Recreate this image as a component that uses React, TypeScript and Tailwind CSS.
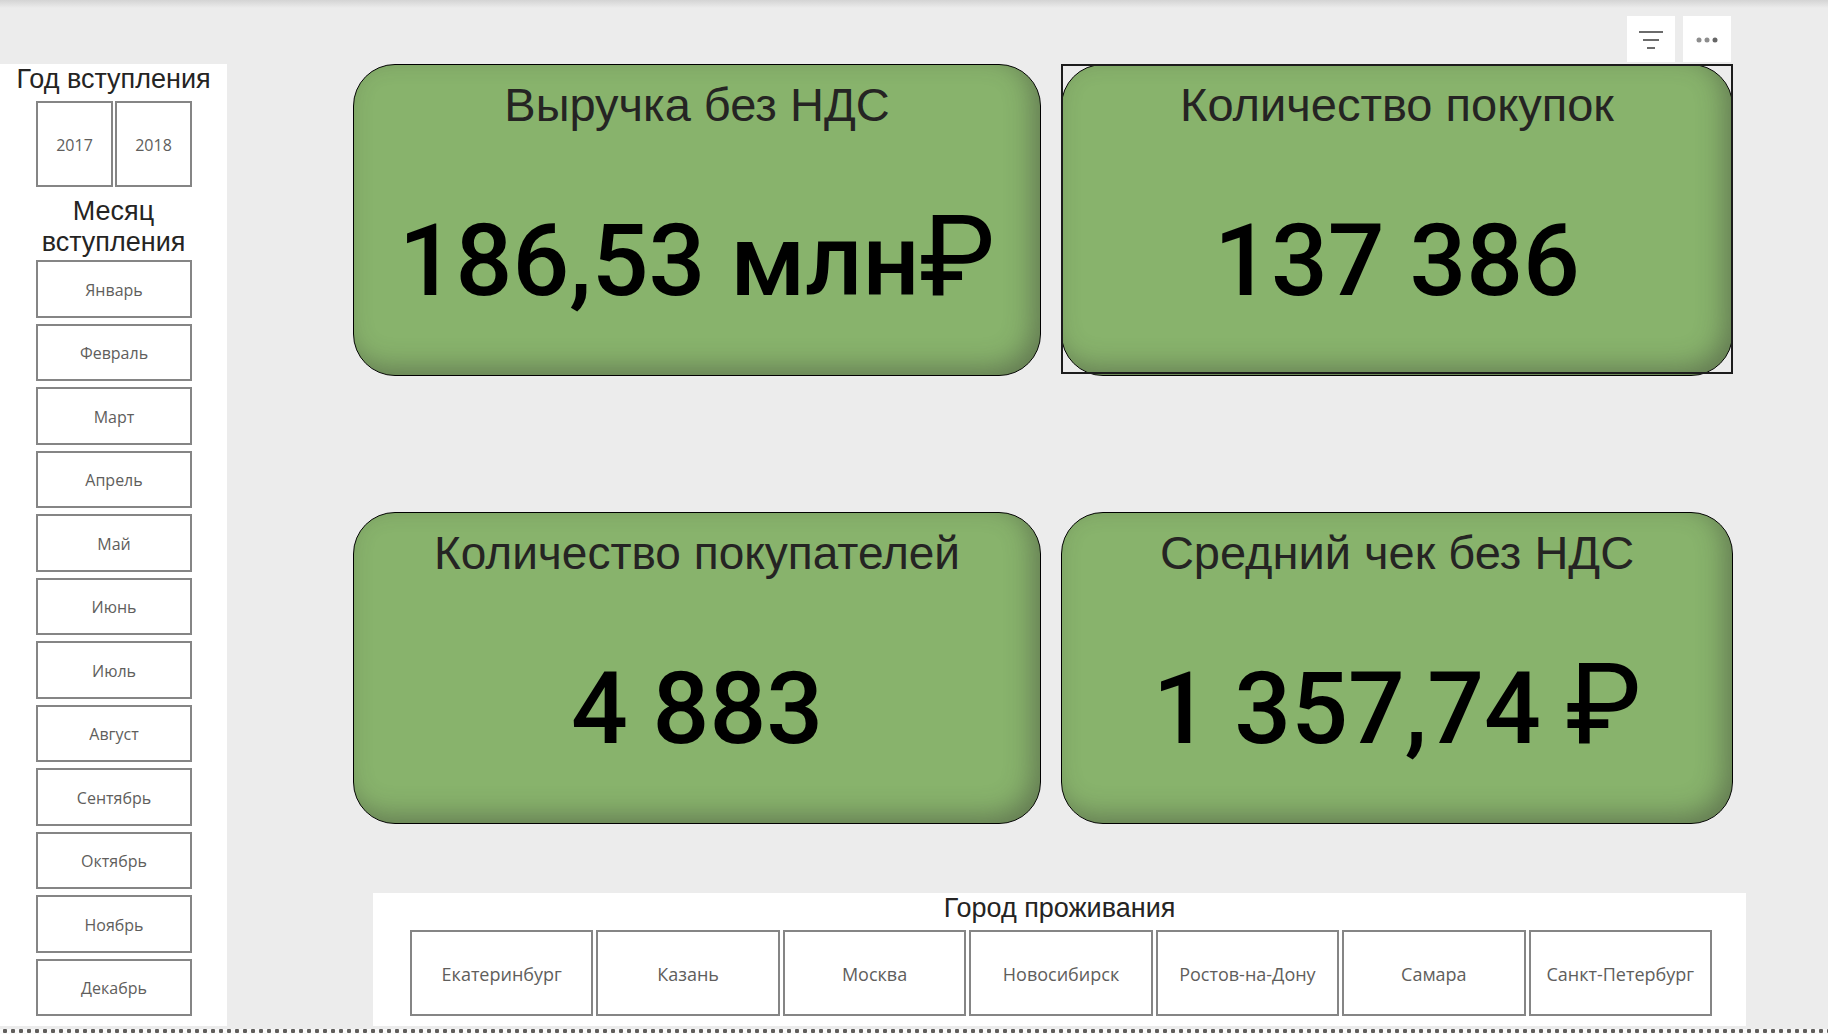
import React from "react";

const months = ["Январь","Февраль","Март","Апрель","Май","Июнь","Июль","Август","Сентябрь","Октябрь","Ноябрь","Декабрь"];
const cities = ["Екатеринбург","Казань","Москва","Новосибирск","Ростов-на-Дону","Самара","Санкт-Петербург"];

function SlicerTitle({ children }: { children: React.ReactNode }) {
  return (
    <h2 className="text-center font-['Liberation_Sans',sans-serif] text-[27px] leading-[31px] text-[#252423]">{children}</h2>
  );
}

function SlicerButton({ label, large = false }: { label: string; large?: boolean }) {
  return (
    <button
      type="button"
      className={`flex min-w-0 items-center justify-center border-2 border-[#858585] bg-white pt-[2px] font-['Open_Sans','Noto_Sans',sans-serif] leading-6 whitespace-nowrap text-[#605e5c] ${large ? "text-[18px]" : "text-[16px]"}`}
    >
      {label}
    </button>
  );
}

function Ruble() {
  return <span className="text-[114px] leading-[0px] font-normal">₽</span>;
}

function Card({
  title,
  children,
  selected = false,
  compact = false,
}: {
  title: string;
  children: React.ReactNode;
  selected?: boolean;
  compact?: boolean;
}) {
  return (
    <section className="relative h-[312px]">
      <div className="flex h-full flex-col items-center rounded-[42px] border border-black bg-[#88b36c] pt-3 shadow-[inset_-9px_-9px_28px_-3px_rgba(55,55,50,0.48)]">
        <h2
          className={`font-['Liberation_Sans',sans-serif] leading-[56px] whitespace-nowrap text-[#252423] ${compact ? "text-[46px]" : "text-[47px]"}`}
        >
          {title}
        </h2>
        <p className="mt-[68px] font-['Roboto',sans-serif] text-[100px] leading-[120px] font-medium whitespace-nowrap text-black">{children}</p>
      </div>
      {selected && <div className="pointer-events-none absolute inset-x-0 top-0 bottom-[2px] border-2 border-[#1c1c1c]" />}
    </section>
  );
}

export default function App() {
  return (
    <main className="flex min-h-screen flex-col bg-[#ececec]">
      <div className="h-2 bg-linear-to-b from-[#d4d4d4] to-[#ececec]" />
      <div className="flex h-14 items-start justify-end gap-2 pt-2 pr-[97px]">
        <button type="button" aria-label="Фильтры" className="flex h-[46px] w-12 items-center justify-center bg-white">
          <svg width="24" height="20" viewBox="0 0 24 20" stroke="#6b6b6b" strokeWidth="2">
            <path d="M0 3H24M4 11H20M8 19H16" />
          </svg>
        </button>
        <button type="button" aria-label="Дополнительные параметры" className="flex h-[46px] w-12 items-center justify-center bg-white">
          <svg width="22" height="8" viewBox="0 0 22 8">
            <circle cx="3" cy="5" r="2.5" fill="#8d8d8d" />
            <circle cx="11" cy="5" r="2.5" fill="#8d8d8d" />
            <circle cx="19" cy="5" r="2.5" fill="#666" />
          </svg>
        </button>
      </div>
      <div className="flex flex-1">
        <aside className="flex w-[227px] flex-col bg-white pb-[10px]">
          <SlicerTitle>Год вступления</SlicerTitle>
          <div className="mt-[6px] mr-[35px] ml-9 grid h-[86px] grid-cols-2 gap-[2px]">
            <SlicerButton label="2017" />
            <SlicerButton label="2018" />
          </div>
          <div className="mt-[9px] px-8">
            <SlicerTitle>Месяц вступления</SlicerTitle>
          </div>
          <div className="mt-[2px] mr-[35px] ml-9 grid flex-1 auto-rows-fr gap-[6px]">
            {months.map((m) => (
              <SlicerButton key={m} label={m} />
            ))}
          </div>
        </aside>
        <div className="flex min-w-0 flex-1 flex-col justify-between">
          <div className="mr-[95px] ml-[126px] grid grid-cols-[688fr_672fr] gap-x-5 gap-y-[136px]">
            <Card title="Выручка без НДС">
              186,53 млн<Ruble />
            </Card>
            <Card title="Количество покупок" selected>137 386</Card>
            <Card title="Количество покупателей" compact>4 883</Card>
            <Card title="Средний чек без НДС">
              1 357,74 <Ruble />
            </Card>
          </div>
          <section className="mr-[82px] ml-[146px] bg-white pb-[10px]">
            <SlicerTitle>Город проживания</SlicerTitle>
            <div className="mt-[6px] mr-[34px] ml-[37px] grid h-[86px] grid-cols-7 gap-[3px]">
              {cities.map((c) => (
                <SlicerButton key={c} label={c} large />
              ))}
            </div>
          </section>
        </div>
      </div>
      <div className="mt-[3px] h-[5px] bg-[#fafafa] bg-[radial-gradient(circle_at_5px_2px,#605e5c_2px,transparent_2.5px)] bg-size-[8px_8px]" />
    </main>
  );
}
